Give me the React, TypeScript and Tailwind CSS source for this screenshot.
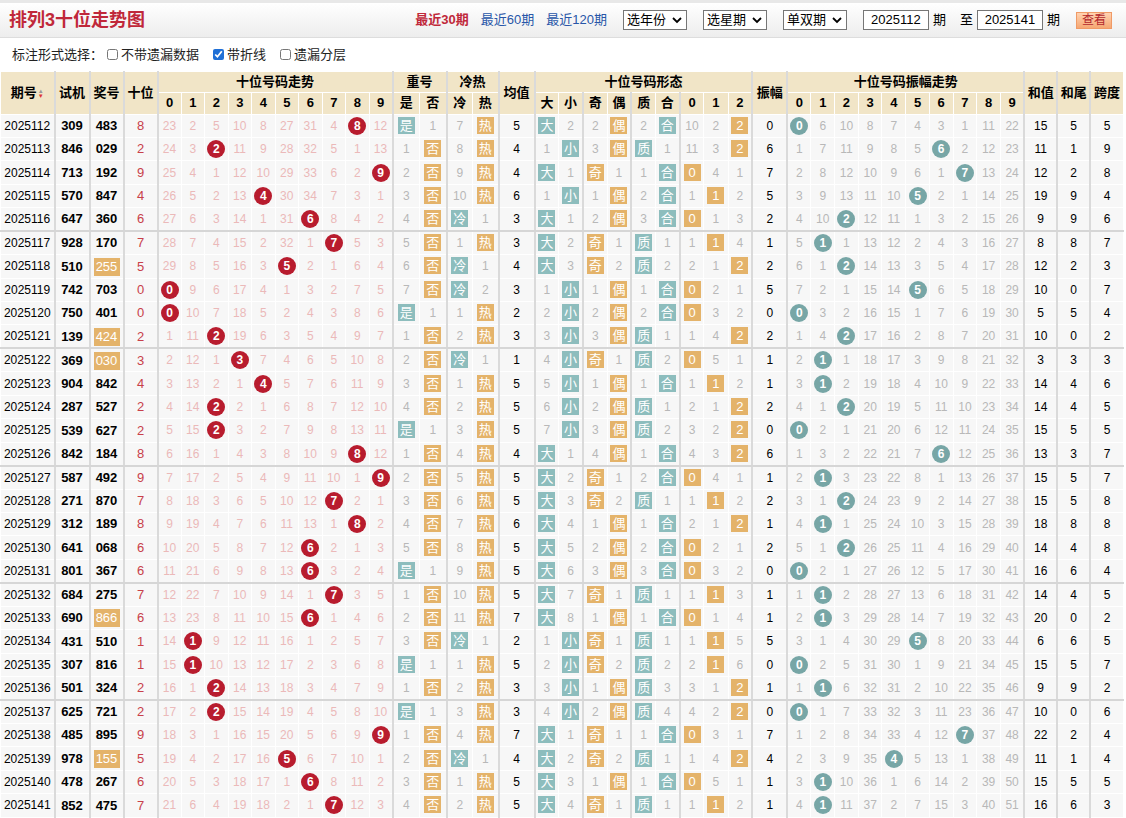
import React from "react";

const raw: [string, string, string][] = [
  ["2025112","309","483"],["2025113","846","029"],["2025114","713","192"],["2025115","570","847"],["2025116","647","360"],
  ["2025117","928","170"],["2025118","510","255"],["2025119","742","703"],["2025120","750","401"],["2025121","139","424"],
  ["2025122","369","030"],["2025123","904","842"],["2025124","287","527"],["2025125","539","627"],["2025126","842","184"],
  ["2025127","587","492"],["2025128","271","870"],["2025129","312","189"],["2025130","641","068"],["2025131","801","367"],
  ["2025132","684","275"],["2025133","690","866"],["2025134","431","510"],["2025135","307","816"],["2025136","501","324"],
  ["2025137","625","721"],["2025138","485","895"],["2025139","978","155"],["2025140","478","267"],["2025141","852","475"],
];
const coldSet = new Set(["2025116","2025118","2025119","2025122","2025134","2025139"]);

type Cell = { v: number | string; hit: boolean };
type Row = {
  p: string; sj: string; jh: string; pair: boolean; ten: number;
  trend: Cell[]; rep: Cell[]; ch: Cell[]; avg: number; form: Cell[]; amp: number; ampT: Cell[];
  sum: number; tail: number; span: number;
};

function build(): Row[] {
  const trend = [22,1,4,9,7,26,30,3,0,11];
  const ampO = [0,5,9,7,6,3,2,0,10,21];
  let prev = 8;
  let repO = 0, noRep = 0;
  let coldO = 6, hotO = 0;
  const formO = [0,1,1,0,1,0,9,1,0];
  const primes = [1,2,3,5,7];
  return raw.map(([p, sj, jh]) => {
    const d = jh.split("").map(Number);
    const ten = d[1];
    const tr: Cell[] = trend.map((c, i) => {
      if (i === ten) { trend[i] = 0; return { v: i, hit: true }; }
      trend[i] = c + 1; return { v: c + 1, hit: false };
    });
    const isRep = ten === prev;
    let rep: Cell[];
    if (isRep) { repO = 0; noRep += 1; rep = [{ v: "是", hit: true }, { v: noRep, hit: false }]; }
    else { noRep = 0; repO += 1; rep = [{ v: repO, hit: false }, { v: "否", hit: true }]; }
    const cold = coldSet.has(p);
    let ch: Cell[];
    if (cold) { coldO = 0; hotO += 1; ch = [{ v: "冷", hit: true }, { v: hotO, hit: false }]; }
    else { hotO = 0; coldO += 1; ch = [{ v: coldO, hit: false }, { v: "热", hit: true }]; }
    const hits = [ten >= 5, ten < 5, ten % 2 === 1, ten % 2 === 0, primes.includes(ten), !primes.includes(ten), ten % 3 === 0, ten % 3 === 1, ten % 3 === 2];
    const labels = ["大","小","奇","偶","质","合","0","1","2"];
    const form: Cell[] = hits.map((h, i) => {
      if (h) { formO[i] = 0; return { v: labels[i], hit: true }; }
      formO[i] += 1; return { v: formO[i], hit: false };
    });
    const amp = Math.abs(ten - prev);
    const ampT: Cell[] = ampO.map((c, i) => {
      if (i === amp) { ampO[i] = 0; return { v: i, hit: true }; }
      ampO[i] = c + 1; return { v: c + 1, hit: false };
    });
    prev = ten;
    const sum = d[0] + d[1] + d[2];
    return {
      p, sj, jh, pair: new Set(d).size < 3, ten, trend: tr, rep, ch,
      avg: Math.round(sum / 3), form, amp, ampT, sum, tail: sum % 10,
      span: Math.max(...d) - Math.min(...d),
    };
  });
}

const rows = build();
const G = "border-l-2 border-l-[#dadada]";
const teal = "bg-[#8dbdbd]";
const orange = "bg-[#e4b36a]";

function Badge({ t, c }: { t: string | number; c: string }) {
  return <span className={`inline-flex h-[17px] min-w-[17px] px-[1px] items-center justify-center text-white text-[13px] leading-none ${c}`}>{t}</span>;
}
function Ball({ t, c }: { t: number; c: string }) {
  return <span className={`inline-flex h-[18px] w-[18px] items-center justify-center rounded-full text-white text-[12px] font-bold leading-none ${c}`}>{t}</span>;
}

const hd = "bg-[#f1e5c7] border border-white text-[13px] font-bold text-black";

export default function App() {
  return (
    <div className="w-[1126px] bg-white text-black" style={{ fontFamily: '"Liberation Sans","Noto Sans CJK SC",sans-serif' }}>
      <div className="h-[38px] border-t-[3px] border-t-[#e8e8e8] border-b border-b-[#dddddd] bg-gradient-to-b from-white to-[#ededed] flex items-center pl-[9px] pr-[14px]">
        <div className="text-[18px] font-bold text-[#c0283a]">排列3十位走势图</div>
        <div className="ml-auto flex items-center text-[13px]">
          <span className="text-[#c0283a] font-bold">最近30期</span>
          <span className="text-[#2856a8] ml-[12px]">最近60期</span>
          <span className="text-[#2856a8] ml-[12px]">最近120期</span>
          {["选年份","选星期","单双期"].map((s) => (
            <span key={s} className="ml-[16px] w-[64px] h-[20px] border border-[#767676] bg-white pl-[3px] pr-[4px] flex items-center justify-between text-[13px]">
              {s}
              <svg width="10" height="8" viewBox="0 0 10 8"><path d="M1 2 L5 6 L9 2" stroke="#000" strokeWidth="1.8" fill="none" /></svg>
            </span>
          ))}
          <span className="ml-[16px] h-[20px] w-[66px] border border-[#767676] bg-white flex items-center justify-center text-[13px]">2025112</span>
          <span className="ml-[4px]">期</span>
          <span className="ml-[14px]">至</span>
          <span className="ml-[4px] h-[20px] w-[66px] border border-[#767676] bg-white flex items-center justify-center text-[13px]">2025141</span>
          <span className="ml-[4px]">期</span>
          <span className="ml-[16px] h-[17px] px-[5px] border border-[#f09a66] bg-gradient-to-b from-[#ffd2b0] to-[#f5a773] text-[#b3262c] text-[12px] flex items-center">查看</span>
        </div>
      </div>
      <div className="h-[33px] flex items-center pl-[12px] text-[13px] text-[#222]">
        <span>标注形式选择：</span>
        <label className="flex items-center ml-[4px]"><input type="checkbox" className="w-[11px] h-[11px] mr-[3px]" readOnly />不带遗漏数据</label>
        <label className="flex items-center ml-[14px]"><input type="checkbox" checked className="w-[11px] h-[11px] mr-[3px] accent-[#1f6fd6]" readOnly />带折线</label>
        <label className="flex items-center ml-[14px]"><input type="checkbox" className="w-[11px] h-[11px] mr-[3px]" readOnly />遗漏分层</label>
      </div>
      <table className="table-fixed border-collapse w-[1124px] text-center text-[12px]">
        <colgroup>
          <col className="w-[54px]" /><col className="w-[35px]" /><col className="w-[34px]" /><col className="w-[34px]" />
          {Array.from({ length: 10 }).map((_, i) => <col key={"t" + i} className="w-[23.5px]" />)}
          <col className="w-[27px]" /><col className="w-[27px]" /><col className="w-[26px]" /><col className="w-[26px]" />
          <col className="w-[36px]" />
          {Array.from({ length: 9 }).map((_, i) => <col key={"f" + i} className="w-[24.2px]" />)}
          <col className="w-[35px]" />
          {Array.from({ length: 10 }).map((_, i) => <col key={"a" + i} className="w-[23.7px]" />)}
          <col className="w-[33px]" /><col className="w-[33px]" /><col className="w-[33px]" />
        </colgroup>
        <thead>
          <tr className="h-[19px]">
            <th rowSpan={2} className={hd}>期号<span className="inline-flex flex-col text-[6px] leading-[5px] align-middle ml-[1px]"><span className="text-[#999]">▲</span><span className="text-[#d33]">▼</span></span></th>
            <th rowSpan={2} className={`${hd} ${G}`}>试机</th>
            <th rowSpan={2} className={`${hd} ${G}`}>奖号</th>
            <th rowSpan={2} className={`${hd} ${G}`}>十位</th>
            <th colSpan={10} className={`${hd} ${G}`}>十位号码走势</th>
            <th colSpan={2} className={`${hd} ${G}`}>重号</th>
            <th colSpan={2} className={`${hd} ${G}`}>冷热</th>
            <th rowSpan={2} className={`${hd} ${G}`}>均值</th>
            <th colSpan={9} className={`${hd} ${G}`}>十位号码形态</th>
            <th rowSpan={2} className={`${hd} ${G}`}>振幅</th>
            <th colSpan={10} className={`${hd} ${G}`}>十位号码振幅走势</th>
            <th rowSpan={2} className={`${hd} ${G}`}>和值</th>
            <th rowSpan={2} className={`${hd} ${G}`}>和尾</th>
            <th rowSpan={2} className={`${hd} ${G}`}>跨度</th>
          </tr>
          <tr className="h-[22px]">
            {[0,1,2,3,4,5,6,7,8,9].map(i => <th key={"h" + i} className={`${hd} ${i === 0 ? G : ""}`}>{i}</th>)}
            <th className={`${hd} ${G}`}>是</th><th className={hd}>否</th>
            <th className={`${hd} ${G}`}>冷</th><th className={hd}>热</th>
            {["大","小","奇","偶","质","合","0","1","2"].map((s, i) => <th key={"fh" + i} className={`${hd} ${i % 2 === 0 && i < 8 ? G : ""}`}>{s}</th>)}
            {[0,1,2,3,4,5,6,7,8,9].map(i => <th key={"ah" + i} className={`${hd} ${i === 0 ? G : ""}`}>{i}</th>)}
          </tr>
        </thead>
        <tbody>
          {rows.map((r, ri) => {
            const sep = ri % 5 === 4 && ri !== rows.length - 1 ? "border-b-2 border-b-[#d6d6d6]" : "";
            const td = `border border-white bg-[#f7f7f7] p-0 ${sep}`;
            return (
              <tr key={r.p} className="h-[23.45px]">
                <td className={`${td} text-[12px]`}>{r.p}</td>
                <td className={`${td} ${G} font-bold text-[13px]`}>{r.sj}</td>
                <td className={`${td} ${G} font-bold text-[13px]`}>{r.pair ? <span className={`inline-block w-[26px] h-[18px] leading-[18px] text-white font-normal ${orange}`}>{r.jh}</span> : r.jh}</td>
                <td className={`${td} ${G} text-[#c8404a] text-[13px]`}>{r.ten}</td>
                {r.trend.map((c, i) => (
                  <td key={"t" + i} className={`${td} ${i === 0 ? G : ""} text-[#ebb9b9]`}>
                    {c.hit ? <Ball t={c.v as number} c="bg-[#b81c2e]" /> : c.v}
                  </td>
                ))}
                {r.rep.map((c, i) => (
                  <td key={"r" + i} className={`${td} ${i === 0 ? G : ""} text-[#b8b8b8]`}>
                    {c.hit ? <Badge t={c.v} c={i === 0 ? teal : orange} /> : c.v}
                  </td>
                ))}
                {r.ch.map((c, i) => (
                  <td key={"c" + i} className={`${td} ${i === 0 ? G : ""} text-[#b8b8b8]`}>
                    {c.hit ? <Badge t={c.v} c={i === 0 ? teal : orange} /> : c.v}
                  </td>
                ))}
                <td className={`${td} ${G}`}>{r.avg}</td>
                {r.form.map((c, i) => (
                  <td key={"f" + i} className={`${td} ${i % 2 === 0 && i < 8 ? G : ""} text-[#b8b8b8]`}>
                    {c.hit ? <Badge t={c.v} c={[0,1,4,5].includes(i) ? teal : orange} /> : c.v}
                  </td>
                ))}
                <td className={`${td} ${G}`}>{r.amp}</td>
                {r.ampT.map((c, i) => (
                  <td key={"a" + i} className={`${td} ${i === 0 ? G : ""} text-[#b8b8b8]`}>
                    {c.hit ? <Ball t={c.v as number} c="bg-[#77a6a6]" /> : c.v}
                  </td>
                ))}
                <td className={`${td} ${G}`}>{r.sum}</td>
                <td className={`${td} ${G}`}>{r.tail}</td>
                <td className={`${td} ${G}`}>{r.span}</td>
              </tr>
            );
          })}
        </tbody>
      </table>
    </div>
  );
}
